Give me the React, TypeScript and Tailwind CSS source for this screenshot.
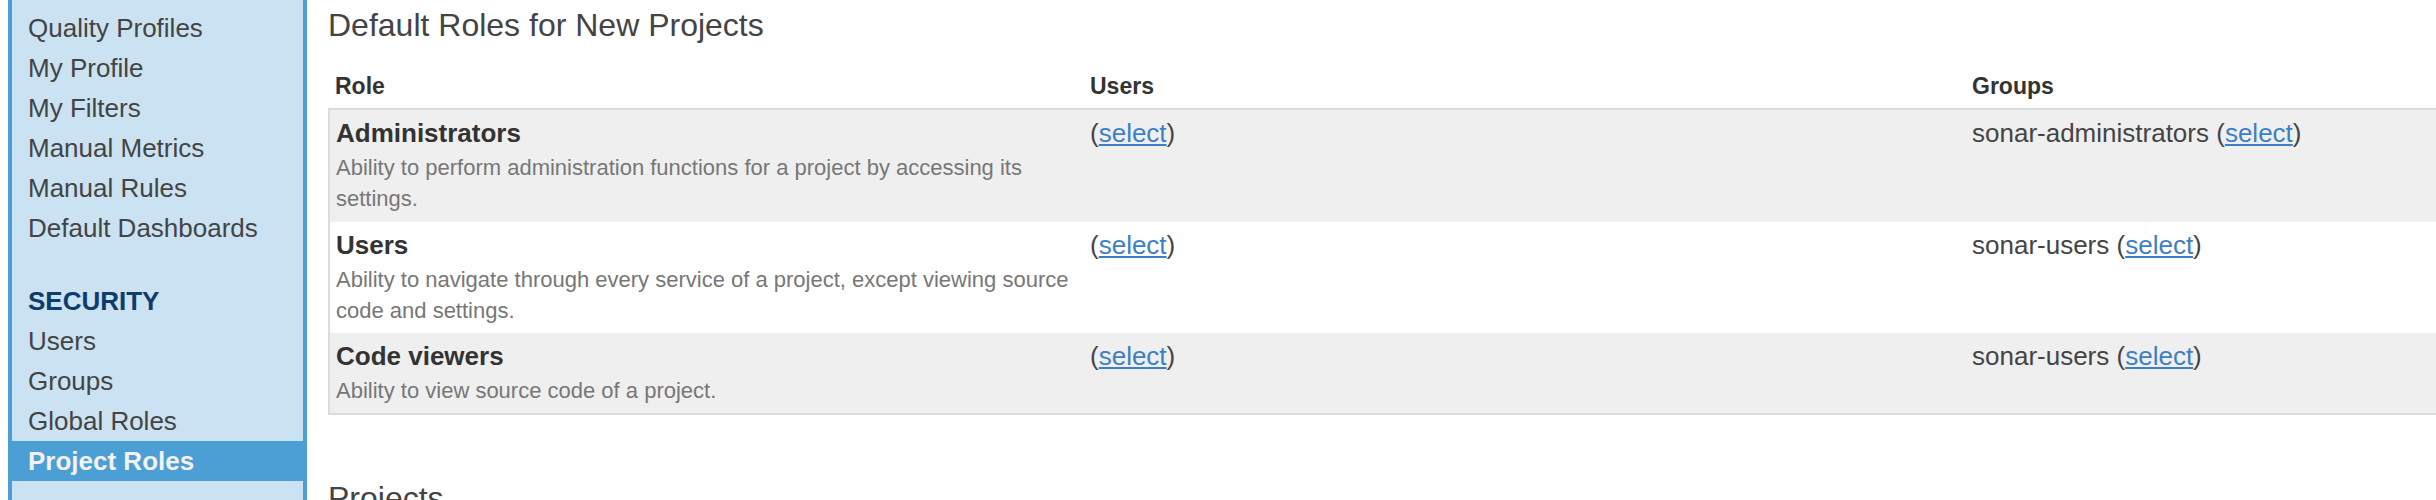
const menu = ['Quality Profiles', 'My Profile', 'My Filters', 'Manual Metrics', 'Manual Rules', 'Default Dashboards'];
const security = ['Users', 'Groups', 'Global Roles'];

interface RoleRow {
  name: string;
  lines: string[];
  group: string;
}

const roles: RoleRow[] = [
  {
    name: 'Administrators',
    lines: ['Ability to perform administration functions for a project by accessing its', 'settings.'],
    group: 'sonar-administrators',
  },
  {
    name: 'Users',
    lines: ['Ability to navigate through every service of a project, except viewing source', 'code and settings.'],
    group: 'sonar-users',
  },
  {
    name: 'Code viewers',
    lines: ['Ability to view source code of a project.'],
    group: 'sonar-users',
  },
];

function Select() {
  return (
    <span>
      (<a href="#" className="text-[#3d7fc6] underline">select</a>)
    </span>
  );
}

export default function App() {
  return (
    <div className="flex w-[2436px] h-[500px] overflow-hidden bg-white pl-2 font-['Liberation_Sans',Arial,sans-serif] text-[#444]">
      <aside className="w-[299px] shrink-0 border-x-4 border-[#4b9fd5] bg-[#cae2f2] pt-2 text-[26px]">
        {menu.map((m) => (
          <div key={m} className="h-10 leading-[40px] pl-4">{m}</div>
        ))}
        <div className="h-[33px]" />
        <div className="h-10 leading-[40px] pl-4 font-bold text-[#0f3b6d]">SECURITY</div>
        {security.map((m) => (
          <div key={m} className="h-10 leading-[40px] pl-4">{m}</div>
        ))}
        <div className="h-10 leading-[40px] pl-4 font-bold bg-[#4b9fd5] text-[#f2f2f2]">Project Roles</div>
      </aside>

      <main className="ml-[21px] pt-[5px] w-[2300px] shrink-0">
        <h1 className="text-[32px] leading-[40px] text-[#444]">Default Roles for New Projects</h1>

        <div className="mt-[26px] grid grid-cols-[754px_882px_1fr] border-x-2 border-transparent text-[23px] font-bold leading-[30px] pb-[7px] text-[#333]">
          <div className="pl-[5px]">Role</div>
          <div className="pl-[6px]">Users</div>
          <div className="pl-[6px]">Groups</div>
        </div>

        <div className="border-2 border-[#dcdcdc]">
          {roles.map((r, i) => (
            <div
              key={r.name}
              className={`grid grid-cols-[754px_882px_1fr] pt-[5px] ${i === 0 ? 'pb-[8px]' : 'pb-[7px]'} ${i % 2 === 0 ? 'bg-[#efefef]' : 'bg-white'}`}
            >
              <div className="pl-[6px] pr-[6px]">
                <div className="text-[26px] leading-[37px] font-bold text-[#333]">{r.name}</div>
                {r.lines.map((l) => (
                  <div key={l} className="text-[22px] leading-[31px] text-[#777]">{l}</div>
                ))}
              </div>
              <div className="pl-[6px] text-[26px] leading-[37px]">
                <Select />
              </div>
              <div className="pl-[6px] text-[26px] leading-[37px]">
                {r.group} <Select />
              </div>
            </div>
          ))}
        </div>

        <h2 className="mt-[63px] text-[32px] leading-[40px] text-[#444]">Projects</h2>
      </main>
    </div>
  );
}
